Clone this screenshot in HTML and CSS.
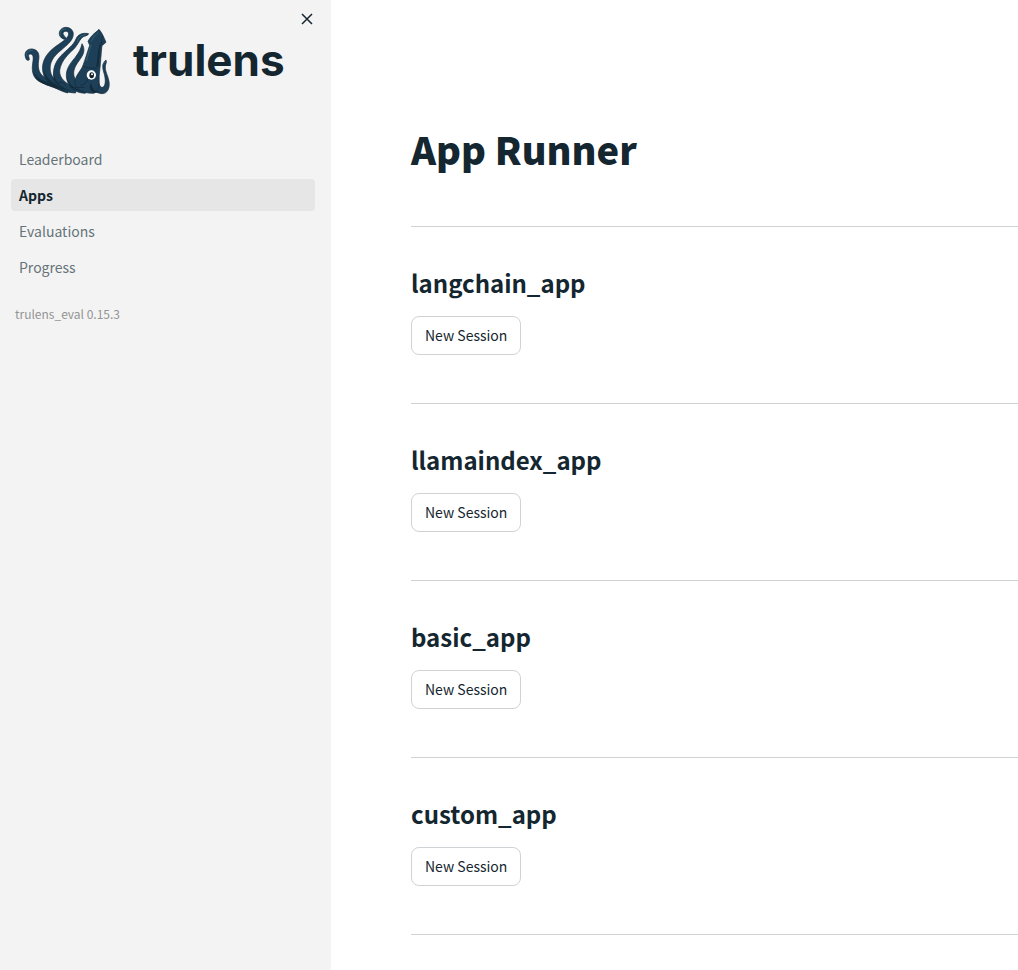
FILE: index.html
```html
<!DOCTYPE html>
<html lang="en">
<head>
<meta charset="utf-8">
<meta name="viewport" content="width=device-width, initial-scale=1">
<title>App Runner</title>
<link rel="stylesheet" href="styles.css">
</head>
<body>
<div class="layout">
  <aside class="sidebar">
    <button class="close" type="button" aria-label="Close sidebar">
      <svg width="12" height="12" viewBox="0 0 12 12" aria-hidden="true"><path d="M1 1l10 10M11 1L1 11"/></svg>
    </button>
    <div class="brand">
      <svg class="squid" width="110" height="90" viewBox="0 0 330 270" aria-hidden="true">
        <g class="skin">
          <path d="M32 129C25 110 39 100 53 102C70 105 74 118 71 136C67 162 73 181 96 191C120 199 145 206 167 218L158 231C128 222 101 213 80 203C55 193 49 172 53 145C56 127 55 116 45 117C37 119 43 127 43 134C39 138 34 136 32 129Z"/>
          <path d="M145 72C128 65 129 44 146 38C164 33 179 47 174 64C170 80 155 91 139 105C113 126 103 143 106 168C110 193 135 208 165 219L158 234C124 225 94 205 86 180C75 147 91 119 116 99C136 83 160 72 161 57C161 46 145 46 144 56C144 62 153 65 153 69C152 73 149 74 145 72Z"/>
          <path d="M221 56C205 53 190 56 183 72C175 91 157 103 138 122C116 144 110 175 120 203C130 223 152 233 182 234L182 217C151 207 133 189 134 167C137 143 153 124 170 108C188 93 191 78 201 68C208 61 218 64 221 56Z"/>
          <path d="M201 86C197 103 192 112 180 128C163 148 150 166 155 192C161 218 181 234 211 235L225 220C193 214 176 196 176 174C177 151 195 137 203 120C210 105 206 94 201 86Z"/>
          <path d="M273 135C261 144 262 158 266 171C271 187 274 208 265 216C255 221 252 207 249 190L226 195C227 219 240 235 261 236C279 236 285 217 282 199C279 181 269 168 271 153C272 146 276 143 273 135Z"/>
          <path d="M252 43C242 53 230 59 219 79L224 91C216 113 211 134 203 154C193 174 178 184 180 207C187 227 207 235 237 235C258 222 251 197 253 177C257 145 258 115 261 92L273 82C267 68 261 53 252 43Z"/>
        </g>
        <path class="shade" d="M261 58C265 68 259 76 263 81C251 98 256 120 250 155L244 155C248 127 248 109 253 92L259 80ZM56 171C67 194 91 198 112 209L136 222C97 212 62 205 56 171ZM88 161C89 192 122 211 152 225C112 218 84 194 88 161ZM116 172C118 202 142 221 170 228C135 224 114 203 116 172ZM156 185C161 211 184 226 213 230C180 230 157 212 156 185ZM228 203C232 224 243 232 263 231L238 234C226 230 220 214 228 203Z"/>
        <path class="line" d="M203 153C216 160 231 159 246 160M197 211C213 207 216 199 219 191M165 216C180 222 195 214 209 218M128 203C138 200 144 202 153 211"/>
        <path class="shine" d="M229 78C237 63 244 58 250 52M228 91C221 112 217 124 215 137M35 123C31 111 42 105 52 106M136 60C132 50 141 42 151 42M187 80C190 67 197 61 211 59M263 151C265 146 268 142 271 140"/>
        <circle class="eye" cx="229" cy="180" r="14"/>
        <ellipse class="pupil" cx="230" cy="181" rx="7" ry="9"/>
        <circle class="eye" cx="231" cy="178" r="3"/>
      </svg>
      <span class="wordmark">trulens</span>
    </div>
    <nav class="nav" aria-label="Pages">
      <a href="#leaderboard">Leaderboard</a>
      <a href="#apps" class="active" aria-current="page">Apps</a>
      <a href="#evaluations">Evaluations</a>
      <a href="#progress">Progress</a>
    </nav>
    <p class="version">trulens_eval 0.15.3</p>
  </aside>
  <main class="content">
    <h1>App Runner</h1>
    <section class="app"><h2>langchain_app</h2><button type="button">New Session</button></section>
    <section class="app"><h2>llamaindex_app</h2><button type="button">New Session</button></section>
    <section class="app"><h2>basic_app</h2><button type="button">New Session</button></section>
    <section class="app"><h2>custom_app</h2><button type="button">New Session</button></section>
    <hr>
  </main>
</div>
</body>
</html>
```
FILE: styles.css
```css
* { box-sizing: border-box; }

body {
  margin: 0;
  color: #14262f;
  background: #fff;
  font-family: "Source Sans Pro", "Noto Sans CJK SC", sans-serif;
  font-size: 14px;
  line-height: 24px;
}

.layout { display: flex; min-height: 100vh; }

.sidebar {
  position: relative;
  flex: 0 0 331px;
  padding: 15px 16px 0 11px;
  background: #f3f3f3;
}

.close {
  position: absolute;
  top: 9px;
  right: 14px;
  display: flex;
  padding: 4px;
  border: 0;
  background: none;
}
.close path { fill: none; stroke: #14262f; stroke-width: 1.5; }

.brand { display: flex; align-items: center; padding-left: 4px; }
.squid { flex: none; }
.skin { fill: #1d4058; stroke: #14293a; stroke-width: 2; stroke-linejoin: round; }
.shade { fill: #142b3c; }
.line { fill: none; stroke: #10273a; stroke-width: 2; }
.shine { fill: none; stroke: #3b7187; stroke-width: 2; stroke-linecap: round; }
.eye { fill: #fff; }
.pupil { fill: #10212b; }

.wordmark {
  padding-left: 8px;
  font-family: Inter, sans-serif;
  font-size: 44px;
  font-weight: 700;
  line-height: 48px;
}

.nav { display: flex; flex-direction: column; gap: 4px; margin-top: 38px; }
.nav a {
  padding: 4px 8px;
  border-radius: 4px;
  color: #667379;
  text-decoration: none;
}
.nav .active { background: #e6e6e6; color: #14262f; font-weight: 700; }

.version { margin: 19px 4px; color: #949494; font-size: 12px; }

.content { flex: 1; min-width: 0; padding: 122px 0 0 80px; }

h1 { margin: 0 0 50px; font-size: 38px; font-weight: 900; line-height: 54px; }

.app { padding: 39px 0 48px; border-top: 1px solid #d0d3d5; }
h2 { margin: 0 0 16px; font-size: 24px; font-weight: 700; line-height: 34px; }

.app button {
  padding: 7px 13px;
  border: 1px solid #d0d3d5;
  border-radius: 8px;
  background: #fff;
  color: inherit;
  font: inherit;
  line-height: 23px;
}

hr { margin: 0; border: 0; border-top: 1px solid #d0d3d5; }
```
